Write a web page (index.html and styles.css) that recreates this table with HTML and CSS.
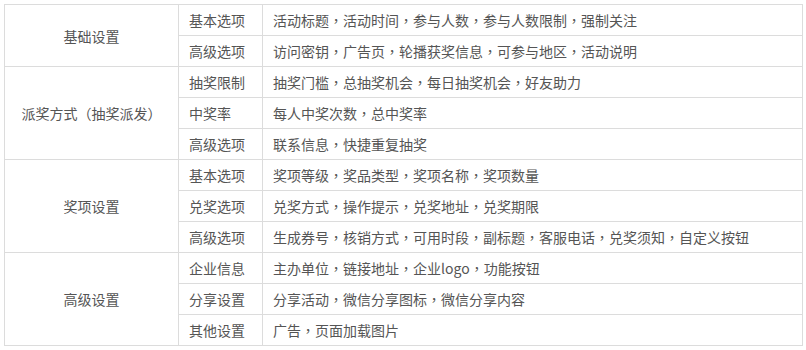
FILE: index.html
```html
<!DOCTYPE html>
<html lang="zh-CN">
<head>
<meta charset="utf-8">
<link rel="stylesheet" href="styles.css">
</head>
<body>
<table class="settings">
  <colgroup>
    <col class="c1"><col class="c2"><col class="c3">
  </colgroup>
  <tbody>
    <tr><td class="group" rowspan="2">基础设置</td><td>基本选项</td><td>活动标题<span class="p" lang="zh-TW">，</span>活动时间<span class="p" lang="zh-TW">，</span>参与人数<span class="p" lang="zh-TW">，</span>参与人数限制<span class="p" lang="zh-TW">，</span>强制关注</td></tr>
    <tr><td>高级选项</td><td>访问密钥<span class="p" lang="zh-TW">，</span>广告页<span class="p" lang="zh-TW">，</span>轮播获奖信息<span class="p" lang="zh-TW">，</span>可参与地区<span class="p" lang="zh-TW">，</span>活动说明</td></tr>
    <tr><td class="group" rowspan="3">派奖方式（抽奖派发）</td><td>抽奖限制</td><td>抽奖门槛<span class="p" lang="zh-TW">，</span>总抽奖机会<span class="p" lang="zh-TW">，</span>每日抽奖机会<span class="p" lang="zh-TW">，</span>好友助力</td></tr>
    <tr><td>中奖率</td><td>每人中奖次数<span class="p" lang="zh-TW">，</span>总中奖率</td></tr>
    <tr><td>高级选项</td><td>联系信息<span class="p" lang="zh-TW">，</span>快捷重复抽奖</td></tr>
    <tr><td class="group" rowspan="3">奖项设置</td><td>基本选项</td><td>奖项等级<span class="p" lang="zh-TW">，</span>奖品类型<span class="p" lang="zh-TW">，</span>奖项名称<span class="p" lang="zh-TW">，</span>奖项数量</td></tr>
    <tr><td>兑奖选项</td><td>兑奖方式<span class="p" lang="zh-TW">，</span>操作提示<span class="p" lang="zh-TW">，</span>兑奖地址<span class="p" lang="zh-TW">，</span>兑奖期限</td></tr>
    <tr><td>高级选项</td><td>生成券号<span class="p" lang="zh-TW">，</span>核销方式<span class="p" lang="zh-TW">，</span>可用时段<span class="p" lang="zh-TW">，</span>副标题<span class="p" lang="zh-TW">，</span>客服电话<span class="p" lang="zh-TW">，</span>兑奖须知<span class="p" lang="zh-TW">，</span>自定义按钮</td></tr>
    <tr><td class="group" rowspan="3">高级设置</td><td>企业信息</td><td>主办单位<span class="p" lang="zh-TW">，</span>链接地址<span class="p" lang="zh-TW">，</span>企业logo<span class="p" lang="zh-TW">，</span>功能按钮</td></tr>
    <tr><td>分享设置</td><td>分享活动<span class="p" lang="zh-TW">，</span>微信分享图标<span class="p" lang="zh-TW">，</span>微信分享内容</td></tr>
    <tr><td>其他设置</td><td>广告<span class="p" lang="zh-TW">，</span>页面加载图片</td></tr>
  </tbody>
</table>
</body>
</html>
```

FILE: styles.css
```css
html, body {
  margin: 0;
  padding: 0;
  background: #fff;
}
body {
  padding: 4px;
  font-family: "Noto Sans CJK SC", "Noto Sans", sans-serif;
  font-size: 14px;
  color: #555;
  text-spacing-trim: space-all;
}
.settings {
  border-collapse: collapse;
  width: 798px;
  table-layout: fixed;
}
.c1 { width: 174px; }
.c2 { width: 84px; }
.c3 { width: 540px; }
.settings td {
  border: 1px solid #dcdcdc;
  height: 31px;
  padding: 0 10px;
  line-height: 20px;
  white-space: nowrap;
  box-sizing: border-box;
}
.settings td.group {
  text-align: center;
}
.p {
  font-family: "Noto Sans CJK TC", "Noto Sans CJK SC", sans-serif;
}
```
